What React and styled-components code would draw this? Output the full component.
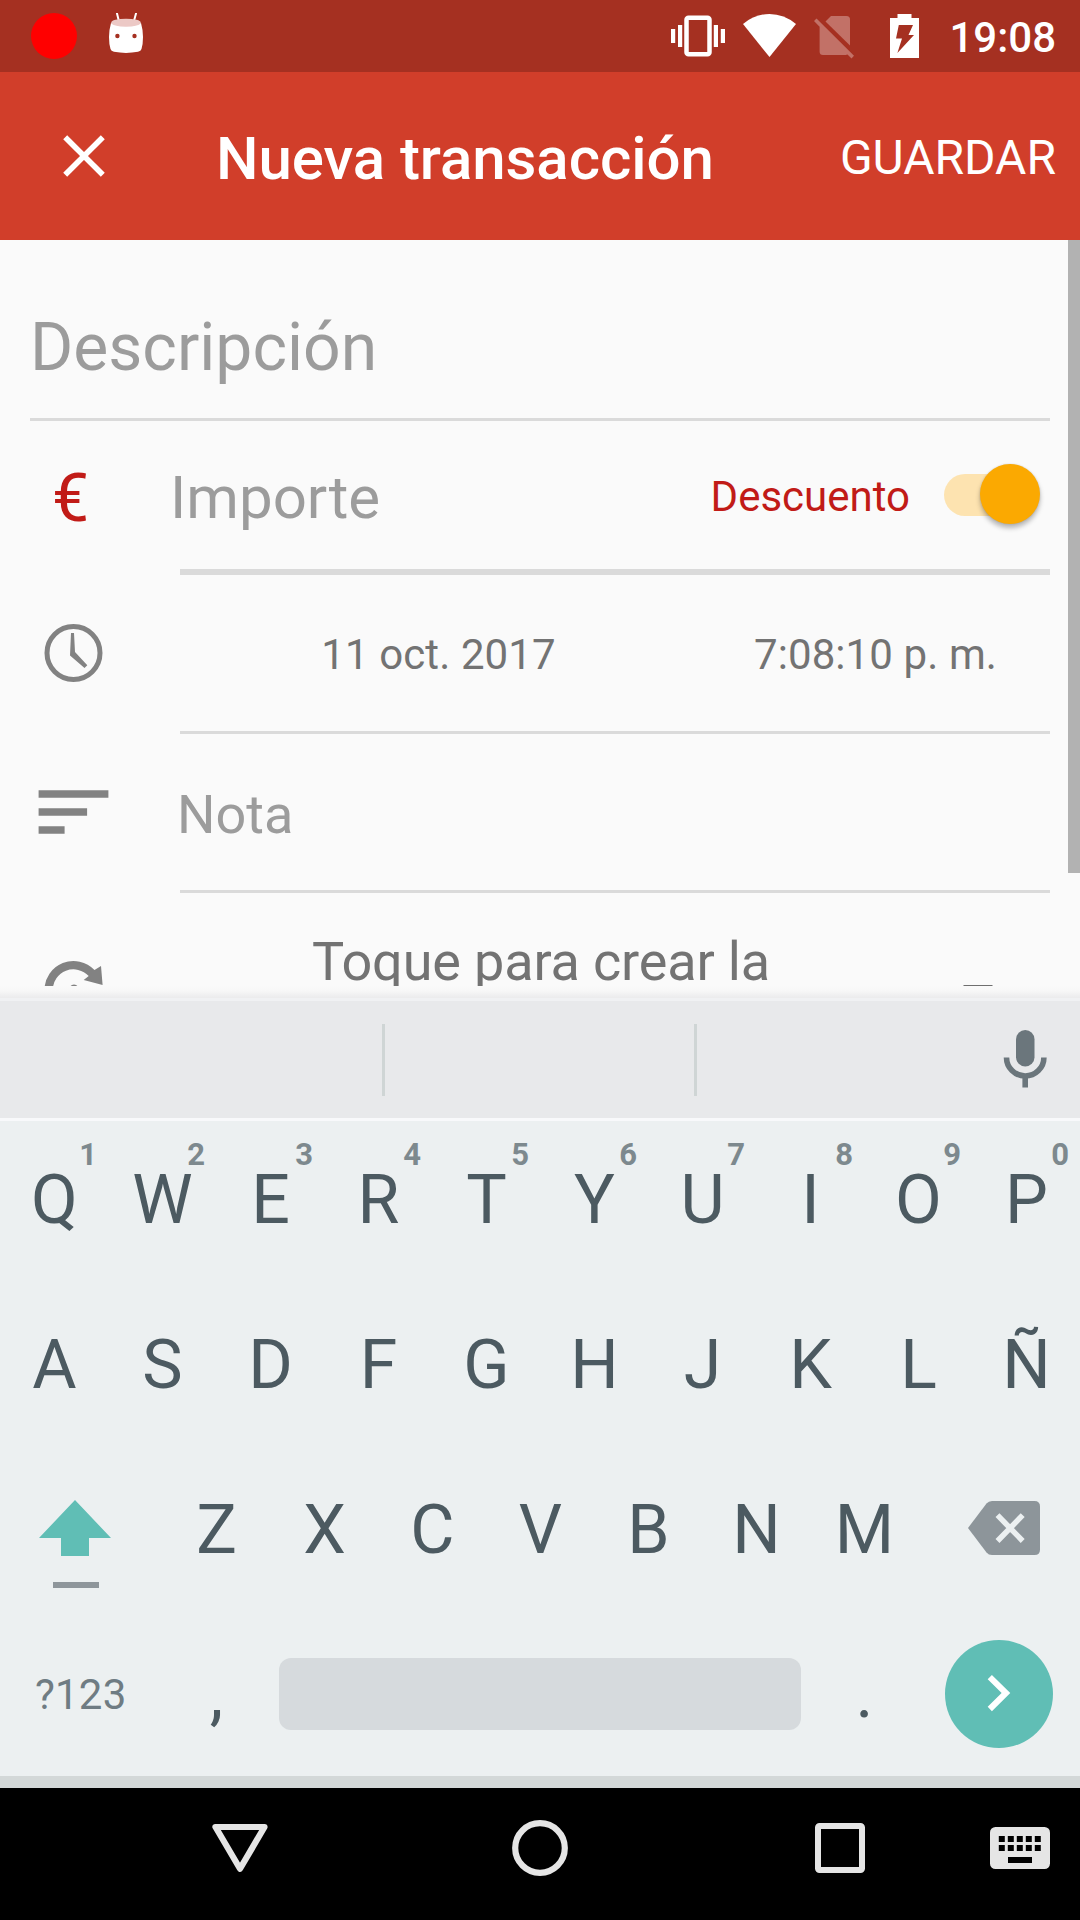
import React from 'react';
import styled, { createGlobalStyle } from 'styled-components';

const GlobalStyle = createGlobalStyle`
  * { box-sizing: border-box; }
  body { margin: 0; background: #000; font-family: Roboto, "Noto Sans", sans-serif; }
  svg { display: block; flex: none; }
`;

const Screen = styled.div`
  width: 1080px;
  height: 1920px;
  display: flex;
  flex-direction: column;
  overflow: hidden;
`;

/* Status bar */
const StatusBar = styled.header`
  height: 72px;
  flex: none;
  display: flex;
  align-items: center;
  justify-content: space-between;
  padding: 0 24px 0 31px;
  background: #a53021;
`;
const StatusGroup = styled.div`
  display: flex;
  align-items: center;
`;
const RecordDot = styled.span`
  width: 46px;
  height: 46px;
  margin-right: 32px;
  border-radius: 50%;
  background: #ff0000;
`;
const StatusIcon = styled.svg`
  margin-right: ${(p) => p.$gap || 0}px;
`;
const Clock = styled.span`
  padding-top: 3px;
  font-size: 42px;
  line-height: 50px;
  font-weight: 500;
  color: #fff;
`;

/* App bar */
const AppBar = styled.div`
  height: 168px;
  flex: none;
  display: flex;
  align-items: center;
  padding: 0 24px 0 63px;
  background: #d13e2a;
  color: #fff;
`;
const Title = styled.h1`
  flex: 1;
  margin: 0 0 0 111px;
  padding-top: 5px;
  font-size: 60px;
  line-height: 70px;
  font-weight: 500;
  letter-spacing: -0.06px;
`;
const SaveButton = styled.button`
  padding: 3px 0 0;
  border: 0;
  background: none;
  color: #fff;
  font: 400 48px/56px Roboto, sans-serif;
`;

/* Form */
const FormArea = styled.main`
  height: 746px;
  flex: none;
  display: flex;
  overflow: hidden;
  background: #fafafa;
`;
const Form = styled.div`
  width: 1068px;
  flex: none;
`;
const ScrollThumb = styled.div`
  width: 12px;
  height: 633px;
  background: #b2b2b2;
`;
const Divider = styled.div`
  height: ${(p) => p.$weight || 3}px;
  margin: 0 18px 0 ${(p) => p.$inset || 180}px;
  background: #dadada;
`;
const DescriptionRow = styled.div`
  height: 178px;
  display: flex;
  align-items: center;
  padding: 38px 0 0 30px;
`;
const Row = styled.div`
  height: ${(p) => p.$height || 156}px;
  display: grid;
  grid-template-columns: ${(p) => p.$columns};
  align-items: ${(p) => p.$align || 'center'};
`;
const Placeholder = styled.span`
  padding-top: ${(p) => p.$drop || 0}px;
  font-size: ${(p) => p.$size}px;
  line-height: 1.2;
  color: #9c9c9c;
`;
const Value = styled.span`
  padding-top: ${(p) => p.$drop}px;
  font-size: ${(p) => p.$size}px;
  line-height: 1.2;
  letter-spacing: ${(p) => p.$tracking || 0}px;
  text-align: center;
  color: #737373;
`;
const IconSlot = styled.div`
  padding-left: ${(p) => p.$left}px;
`;
const Currency = styled.span`
  padding: 8px 0 0 52px;
  font-size: 66px;
  line-height: 1.2;
  color: #c11b17;
`;
const KindLabel = styled.span`
  padding: 4px 34px 0 0;
  font-size: 42px;
  line-height: 1.2;
  text-align: right;
  color: #c11b17;
`;
const SwitchTrack = styled.div`
  width: 90px;
  height: 42px;
  display: flex;
  align-items: center;
  justify-content: flex-end;
  border-radius: 21px;
  background: #fde3b0;
`;
const SwitchThumb = styled.div`
  width: 60px;
  height: 60px;
  flex: none;
  margin: -2px -6px 0 0;
  border-radius: 50%;
  background: #fba901;
  box-shadow: 0 4px 5px rgba(0, 0, 0, 0.28), 0 0 2px rgba(0, 0, 0, 0.14);
`;

/* Keyboard */
const KeyboardShadow = styled.div`
  height: 12px;
  flex: none;
  background: linear-gradient(#fafafa, #f7f7f7 40%, #ebebec);
`;
const Suggestions = styled.div`
  height: 123px;
  flex: none;
  display: grid;
  grid-template-columns: 382px 3px 309px 3px 1fr;
  align-items: center;
  border-top: 3px solid #f0f1f3;
  border-bottom: 3px solid #f8f9fb;
  background: #e8e9eb;
`;
const Separator = styled.span`
  grid-column: ${(p) => p.$column};
  height: 72px;
  background: #cfd5d5;
`;
const MicSlot = styled.div`
  grid-column: 5;
  justify-self: end;
  padding: 0 33px 2px 0;
`;
const Keyboard = styled.section`
  height: 667px;
  flex: none;
  border-bottom: 12px solid #d3d8d8;
  background: #ecf0f1;
`;
const KeyRow = styled.div`
  height: ${(p) => p.$height || 165}px;
  display: grid;
  grid-template-columns: ${(p) => p.$columns || 'repeat(10, 108px)'};
`;
const Key = styled.div`
  position: relative;
  padding: ${(p) => p.$top || 39}px 0 0 1px;
  text-align: center;
  font-size: 68px;
  line-height: 80px;
  color: #4c5a61;
`;
const Hint = styled.span`
  position: absolute;
  top: 16px;
  right: 11px;
  font-size: 31px;
  line-height: 36px;
  font-weight: 700;
  color: #7d898e;
`;
const ModeKey = styled.div`
  padding: 54px 0 0 35px;
  font-size: 42px;
  line-height: 50px;
  letter-spacing: 0.2px;
  color: #6f7c83;
`;
const IconKey = styled.div`
  display: flex;
  padding: ${(p) => p.$pad};
`;
const SpaceBar = styled.div`
  height: 72px;
  margin: 42px 9px 0;
  border-radius: 12px;
  background: #d6dadd;
`;
const NextKey = styled.div`
  width: 108px;
  height: 108px;
  margin: 24px 0 0 27px;
  display: flex;
  align-items: center;
  justify-content: center;
  border-radius: 50%;
  background: #60beb5;
`;

/* Navigation bar */
const NavBar = styled.nav`
  height: 132px;
  flex: none;
  display: grid;
  grid-template-columns: 212px 300px 303px 175px 1fr;
  padding-bottom: 12px;
  align-items: center;
  background: #000;
`;
const NavIcon = styled.svg`
  grid-column: ${(p) => p.$column};
`;

const topKeys = ['Q', 'W', 'E', 'R', 'T', 'Y', 'U', 'I', 'O', 'P'];
const homeKeys = ['A', 'S', 'D', 'F', 'G', 'H', 'J', 'K', 'L', 'Ñ'];
const bottomKeys = ['Z', 'X', 'C', 'V', 'B', 'N', 'M'];

function Status() {
  return (
    <StatusBar>
      <StatusGroup>
        <RecordDot />
        <svg width="34" height="46" viewBox="109 13 34 46">
          <path d="M117 13.5L119 21.5M136 13.5L133.8 21.5" stroke="#fff" strokeWidth="2" strokeLinecap="round" />
          <path d="M111 23Q126 28 141 23Q143 30 143 37Q143 44 141.500 49Q141 51 138 51.800Q126 54 114 51.800Q111 51 110.500 49Q109 44 109 37Q109 30 111 23Z" fill="#fff" />
          <ellipse cx="126" cy="22.700" rx="14.800" ry="4" fill="#ecc9c6" />
          <circle cx="117.400" cy="36" r="2.200" fill="#a53021" />
          <circle cx="134.500" cy="36" r="2.200" fill="#a53021" />
        </svg>
      </StatusGroup>
      <StatusGroup>
        <StatusIcon $gap={18} width="54" height="72" viewBox="671 0 54 72" fill="#fff">
          <rect x="686.500" y="17.800" width="23" height="36.400" rx="2" fill="none" stroke="#fff" strokeWidth="4.500" />
          <path d="M671 29h4.200v14H671zM678 25h4.200v22H678zM713.800 25h4.200v22h-4.200zM720.800 29h4.200v14h-4.200z" />
        </StatusIcon>
        <StatusIcon $gap={18} width="53" height="72" viewBox="743 0 53 72">
          <path d="M743 24Q755 14 769.500 14T796 24L769.500 57Z" fill="#fff" />
        </StatusIcon>
        <StatusIcon $gap={36} width="40" height="72" viewBox="814 0 40 72" fill="#c27167">
          <path d="M831 16H846.500Q850 16 850 19.500V45.500L825.500 21.500Z" />
          <path d="M814 21L816.500 18.500L854 55.800L851.500 58.500L847.500 54.600L845.500 55H823Q819.600 55 819.600 51.500V26.800Z" />
        </StatusIcon>
        <StatusIcon $gap={30} width="29" height="72" viewBox="890 0 29 72">
          <path fill="#fff" fillRule="evenodd" d="M897.500 14h14v4H919v40h-29V18h7.500zM898.800 25L896 38.500H902L897.400 53L914 35H908.500L913 25Z" />
        </StatusIcon>
        <Clock>19:08</Clock>
      </StatusGroup>
    </StatusBar>
  );
}

function TransactionForm() {
  return (
    <FormArea>
      <Form>
        <DescriptionRow>
          <Placeholder $size={66}>Descripción</Placeholder>
        </DescriptionRow>
        <Divider $inset={30} />
        <Row $height={148} $columns="170px 440px 334px 90px">
          <Currency>€</Currency>
          <Placeholder $size={60} $drop={5}>Importe</Placeholder>
          <KindLabel>Descuento</KindLabel>
          <SwitchTrack>
            <SwitchThumb />
          </SwitchTrack>
        </Row>
        <Divider $weight={6} />
        <Row $columns="180px 517px 357px">
          <IconSlot $left={44}>
            <svg width="60" height="60" viewBox="44 623 60 60">
              <circle cx="73.500" cy="653" r="26.500" fill="none" stroke="#828282" strokeWidth="5" />
              <path d="M71 633h3l1 19L87.300 665.200L84.500 668L70 655.500Z" fill="#828282" />
            </svg>
          </IconSlot>
          <Value $size={42} $drop={5} $tracking={0.1}>11 oct. 2017</Value>
          <Value $size={42} $drop={5} $tracking={0.1}>7:08:10 p. m.</Value>
        </Row>
        <Divider />
        <Row $columns="177px 1fr">
          <IconSlot $left={38}>
            <svg width="72" height="44" viewBox="38 790 72 44" fill="#828282">
              <path d="M38.600 790.200h69.800v7.600H38.600zM38.600 808.200h48.500v7.600H38.600zM38.600 826.200h26v7.600h-26z" />
            </svg>
          </IconSlot>
          <Placeholder $size={54} $drop={7}>Nota</Placeholder>
        </Row>
        <Divider />
        <Row $height={93} $columns="180px 722px 166px" $align="start">
          <IconSlot $left={44}>
            <svg width="60" height="93" viewBox="44 893 60 93" fill="#828282">
              <path d="M44.500 990A29 29 0 0 1 94.500 970L101 966L102.600 985L83.700 980L88.700 976A20.700 20.700 0 0 0 52.800 990Z" />
              <circle cx="74" cy="988.500" r="4" />
            </svg>
          </IconSlot>
          <Value $size={54} $drop={37} $tracking={-0.15}>Toque para crear la</Value>
          <IconSlot $left={61}>
            <svg width="30" height="93" viewBox="0 0 30 93">
              <path d="M0.500 92H29.500V93H0.500Z" fill="#6f6f6f" />
            </svg>
          </IconSlot>
        </Row>
      </Form>
      <ScrollThumb />
    </FormArea>
  );
}

function SoftKeyboard() {
  return (
    <>
      <KeyboardShadow />
      <Suggestions>
        <Separator $column={2} />
        <Separator $column={4} />
        <MicSlot>
          <svg width="44" height="60" viewBox="1003 1029 44 60">
            <rect x="1016" y="1030" width="18.500" height="36.500" rx="9.250" fill="#6b767c" />
            <path d="M1006.500 1057.500A18.700 18.500 0 0 0 1043.900 1057.500M1025.200 1075V1087.500" fill="none" stroke="#6b767c" strokeWidth="5.600" />
          </svg>
        </MicSlot>
      </Suggestions>
      <Keyboard>
        <KeyRow>
          {topKeys.map((k, i) => (
            <Key key={k}>
              {k}
              <Hint>{(i + 1) % 10}</Hint>
            </Key>
          ))}
        </KeyRow>
        <KeyRow>
          {homeKeys.map((k) => (
            <Key key={k}>{k}</Key>
          ))}
        </KeyRow>
        <KeyRow $columns="162px repeat(7, 108px) 162px">
          <IconKey $pad="49px 0 0 39px">
            <svg width="72" height="88" viewBox="39 1500 72 88">
              <path d="M75 1500L111 1538H89V1556H61V1538H39Z" fill="#60beb5" />
              <path d="M53 1582h46v6H53z" fill="#8e969b" />
            </svg>
          </IconKey>
          {bottomKeys.map((k) => (
            <Key key={k}>{k}</Key>
          ))}
          <IconKey $pad="50px 0 0 50px">
            <svg width="72" height="54" viewBox="968 1501 72 54">
              <path d="M992 1501H1034.500Q1040 1501 1040 1506.500V1549.500Q1040 1555 1034.500 1555H992Q988.500 1555 986.500 1552.500L968 1528L986.500 1503.500Q988.500 1501 992 1501Z" fill="#8d959a" />
              <path d="M997.500 1515.200L1022.700 1541M1022.700 1515.200L997.500 1541" stroke="#ecf0f1" strokeWidth="5.500" />
            </svg>
          </IconKey>
        </KeyRow>
        <KeyRow $height={160} $columns="162px 108px 540px 108px 162px">
          <ModeKey>?123</ModeKey>
          <Key $top={38}>,</Key>
          <SpaceBar />
          <Key $top={38}>.</Key>
          <NextKey>
            <svg width="24" height="38" viewBox="987 1675 24 38">
              <path d="M989.800 1677.200L1006 1693L989.800 1709" fill="none" stroke="#fff" strokeWidth="6" />
            </svg>
          </NextKey>
        </KeyRow>
      </Keyboard>
    </>
  );
}

function Navigation() {
  return (
    <NavBar>
      <NavIcon $column={2} width="56" height="56" viewBox="212 1820 56 56">
        <path d="M215.500 1827H264.500L240 1868.800Z" fill="none" stroke="#e5e5e5" strokeWidth="6.200" strokeLinejoin="round" />
      </NavIcon>
      <NavIcon $column={3} width="56" height="56" viewBox="0 0 56 56">
        <circle cx="28" cy="28" r="24.800" fill="none" stroke="#e5e5e5" strokeWidth="6.200" />
      </NavIcon>
      <NavIcon $column={4} width="50" height="50" viewBox="0 0 50 50">
        <rect x="3" y="3" width="44" height="44" rx="1.500" fill="none" stroke="#e5e5e5" strokeWidth="6" />
      </NavIcon>
      <NavIcon $column={5} width="60" height="42" viewBox="0 0 60 42">
        <rect width="60" height="42" rx="5.500" fill="#e5e5e5" />
        {[9, 18, 27, 36, 45].map((x) => (
          <path key={x} d={`M${x - 0.2} 9h6v6h-6zM${x - 0.2} 18h6v6h-6z`} fill="#000" />
        ))}
        <path d="M18 30h24v6H18z" fill="#000" />
      </NavIcon>
    </NavBar>
  );
}

export default function App() {
  return (
    <Screen>
      <GlobalStyle />
      <Status />
      <AppBar>
        <svg width="42" height="42" viewBox="0 0 42 42">
          <path d="M2.200 2.200L39.800 39.800M39.800 2.200L2.200 39.800" stroke="#fff" strokeWidth="5.600" />
        </svg>
        <Title>Nueva transacción</Title>
        <SaveButton>GUARDAR</SaveButton>
      </AppBar>
      <TransactionForm />
      <SoftKeyboard />
      <Navigation />
    </Screen>
  );
}
